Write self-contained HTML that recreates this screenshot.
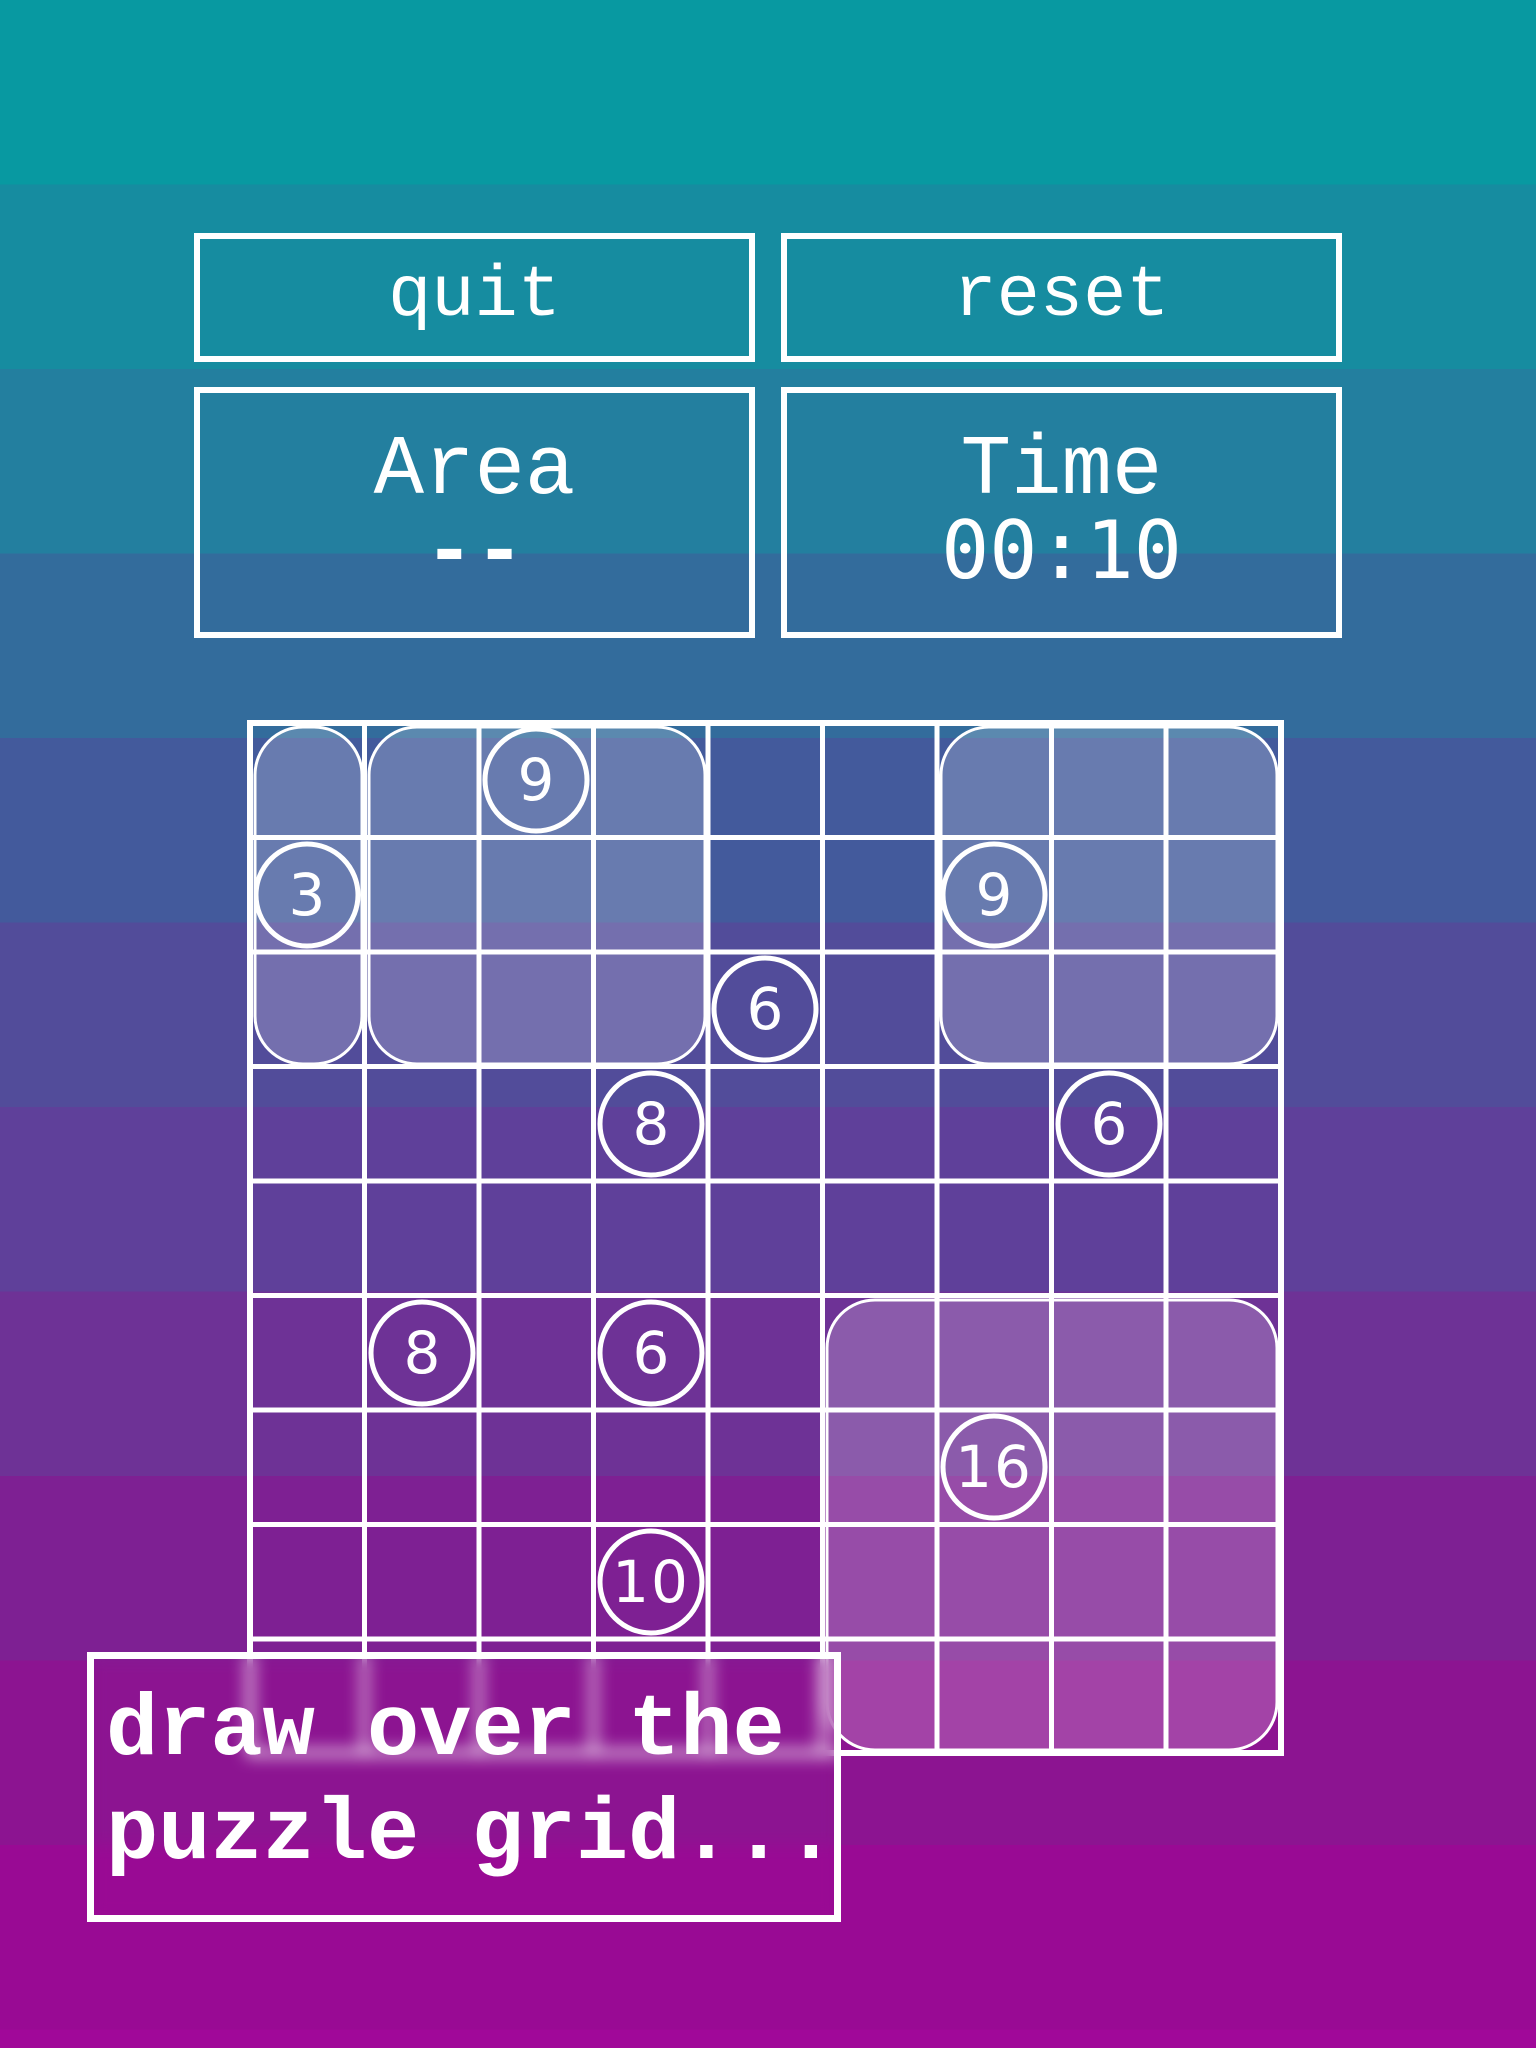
<!DOCTYPE html>
<html><head><meta charset="utf-8"><style>
html,body{margin:0;padding:0}
body{width:1536px;height:2048px;position:relative;overflow:hidden;font-family:"Liberation Mono",monospace;color:#fff;
background:linear-gradient(to bottom,
#0899a1 0,#0899a1 184.5px,
#168ca0 184.5px,#168ca0 369px,
#237f9f 369px,#237f9f 553.5px,
#336c9c 553.5px,#336c9c 738px,
#435a9c 738px,#435a9c 922.5px,
#524c9a 922.5px,#524c9a 1107px,
#5f409a 1107px,#5f409a 1291.5px,
#6e3296 1291.5px,#6e3296 1476px,
#7e2093 1476px,#7e2093 1660.5px,
#8c1491 1660.5px,#8c1491 1845px,
#990a94 1845px,#990a94 2029.5px,
#a00899 2029.5px);}
.box{position:absolute;border:6px solid #fff;box-sizing:border-box;text-align:center}
.t{position:absolute;left:0;right:0;text-align:center;white-space:pre}
</style></head><body>
<div class="box" style="left:194px;top:233px;width:561px;height:129px"></div>
<div class="box" style="left:781px;top:233px;width:561px;height:129px"></div>
<div class="box" style="left:194px;top:387px;width:561px;height:251px"></div>
<div class="box" style="left:781px;top:387px;width:561px;height:251px"></div>
<div class="t" style="left:194px;width:561px;top:256px;font-size:72px;line-height:80px">quit</div>
<div class="t" style="left:781px;width:561px;top:256px;font-size:72px;line-height:80px">reset</div>
<div class="t" style="left:194px;width:561px;top:427px;font-size:84px;line-height:90px">Area</div>
<div class="t" style="left:194px;width:561px;top:510px;font-size:84px;line-height:90px;font-weight:bold">--</div>
<div class="t" style="left:781px;width:561px;top:427px;font-size:84px;line-height:90px">Time</div>
<div class="t" style="left:781px;width:561px;top:506px;font-size:80px;line-height:90px;font-family:'DejaVu Sans Mono',monospace;font-weight:300">00:10</div>

<svg style="position:absolute;left:0;top:0" width="1536" height="2048">
<g fill="rgba(255,255,255,0.2)" stroke="#fff" stroke-width="3">
<rect x="255" y="727" width="107" height="337" rx="48"/>
<rect x="369" y="727" width="336" height="337" rx="48"/>
<rect x="941" y="727" width="336" height="337" rx="48"/>
<rect x="827" y="1300" width="450" height="450" rx="48"/>
</g>
<g stroke="#fff" stroke-width="5" fill="none">
<rect x="250" y="723" width="1031" height="1030" stroke-width="6"/>
<path d="M364.5 723V1753M479 723V1753M593.5 723V1753M708 723V1753M822.5 723V1753M937 723V1753M1051.5 723V1753M1166 723V1753
M250 837.5H1281M250 952H1281M250 1066.5H1281M250 1181H1281M250 1295.5H1281M250 1410H1281M250 1524.5H1281M250 1639H1281"/>
</g>
<g fill="none" stroke="#fff" stroke-width="5">
<circle cx="536" cy="780" r="51"/>
<circle cx="307" cy="895" r="51"/>
<circle cx="994" cy="895" r="51"/>
<circle cx="765" cy="1009" r="51"/>
<circle cx="651" cy="1124" r="51"/>
<circle cx="1109" cy="1124" r="51"/>
<circle cx="422" cy="1353" r="51"/>
<circle cx="651" cy="1353" r="51"/>
<circle cx="994" cy="1467" r="51"/>
<circle cx="651" cy="1582" r="51"/>
</g>
<g fill="#fff" font-family="DejaVu Sans,sans-serif" font-size="58" text-anchor="middle">
<text x="536" y="800">9</text>
<text x="307" y="915">3</text>
<text x="994" y="915">9</text>
<text x="765" y="1029">6</text>
<text x="651" y="1144">8</text>
<text x="1109" y="1144">6</text>
<text x="422" y="1373">8</text>
<text x="651" y="1373">6</text>
<text x="994" y="1487" letter-spacing="2">16</text>
<text x="651" y="1602" letter-spacing="2">10</text>
</g>
</svg>

<div style="position:absolute;left:87px;top:1652px;width:754px;height:270px;border:7px solid #fff;box-sizing:border-box;backdrop-filter:blur(8px);-webkit-backdrop-filter:blur(8px)"></div>
<div style="position:absolute;left:106px;top:1680px;font-size:87px;line-height:104px;font-weight:bold;white-space:pre">draw over the
puzzle grid...</div>
</body></html>
